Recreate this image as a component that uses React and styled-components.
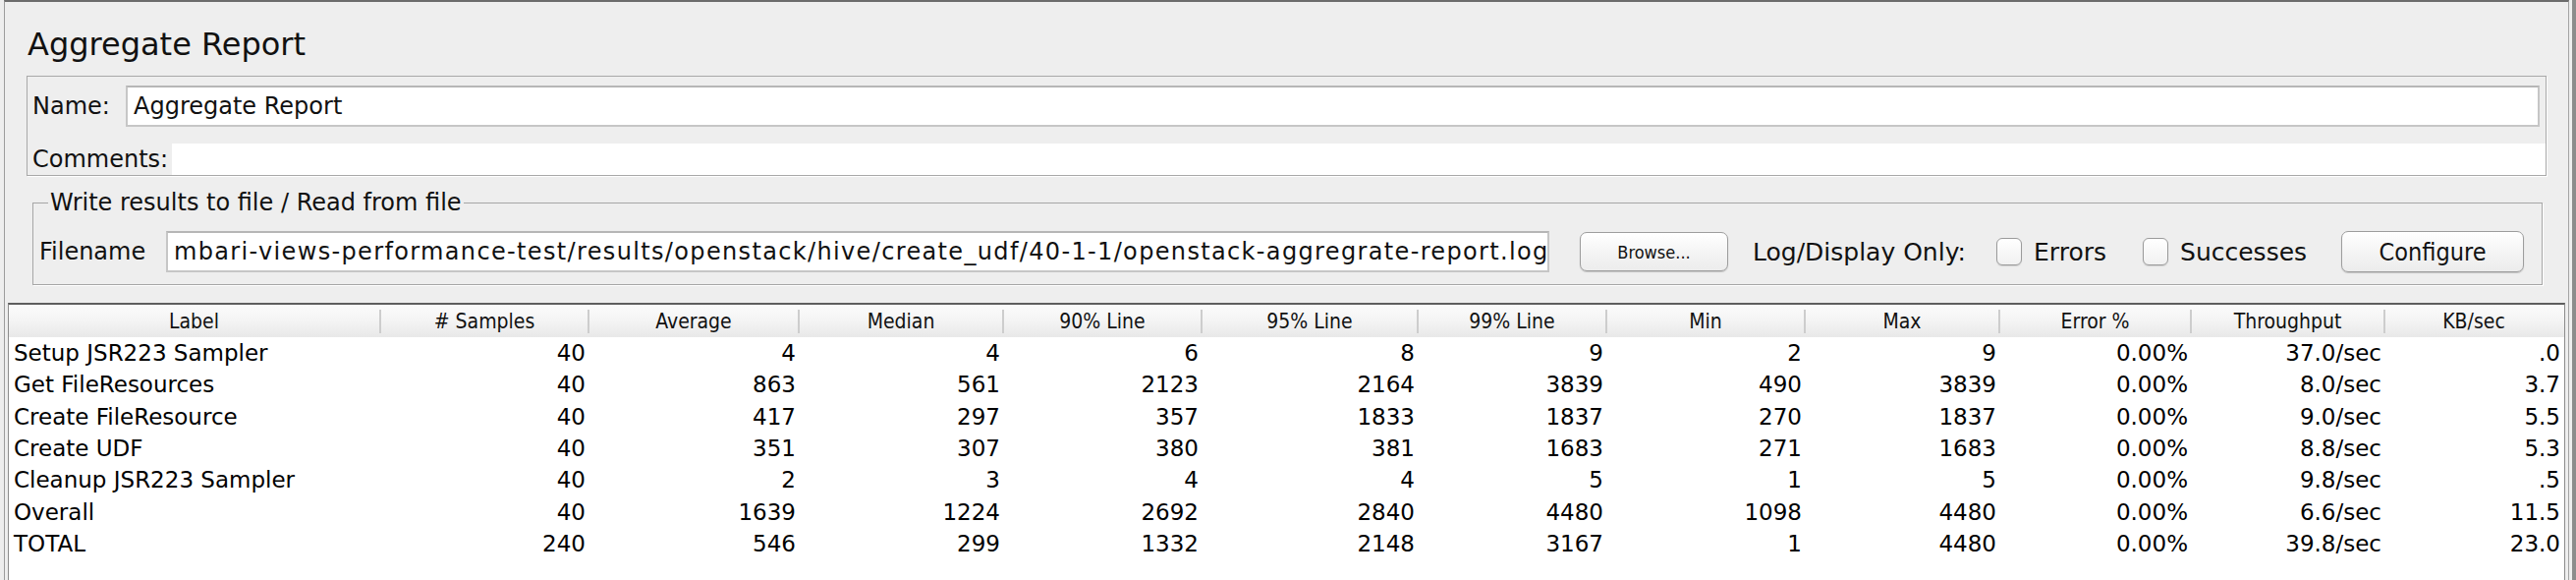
import React from "react";
import styled, { createGlobalStyle } from "styled-components";

const GlobalStyle = createGlobalStyle`
  html, body {
    margin: 0;
    padding: 0;
    background: #eeeeee;
  }
  body {
    font-family: "DejaVu Sans", "Liberation Sans", sans-serif;
    color: #111;
    overflow: hidden;
  }
`;

const Window = styled.div`
  width: 2622px;
  height: 590px;
  box-sizing: border-box;
  padding: 0 3px 0 4px;
  border-right: 4px solid #8c8c8c;
  background: #eeeeee;
  display: flex;
`;

const Frame = styled.div`
  flex: 1;
  height: 590px;
  box-sizing: border-box;
  border-top: 2px solid #6c6c6c;
  border-left: 1px solid #9c9c9c;
  border-right: 1px solid #a4a4a4;
  display: flex;
  flex-direction: column;
`;

const Title = styled.div`
  padding: 23px 0 0 23px;
  margin-bottom: 12px;
  height: 40px;
  line-height: 40px;
  font-size: 32px;
  color: #111;
`;

const NamePanel = styled.div`
  margin: 0 22px 0 22px;
  border: 1px solid #a8a8a8;
  box-shadow: 1px 1px 0 #ffffff;
  display: flex;
  flex-direction: column;
`;

const FieldRow = styled.div`
  display: flex;
  align-items: center;
  height: ${(p) => p.$h}px;
  margin-top: ${(p) => p.$top}px;
  padding: 0 ${(p) => p.$right}px 0 5px;
`;

const Label = styled.span`
  font-size: 24px;
  width: ${(p) => p.$w}px;
  flex: none;
  white-space: nowrap;
`;

const TextBox = styled.div`
  flex: ${(p) => (p.$w ? "none" : 1)};
  width: ${(p) => (p.$w ? `${p.$w}px` : "auto")};
  height: 42px;
  box-sizing: border-box;
  background: #ffffff;
  border: 2px solid #c6c6c6;
  border-top-color: #b6b6b6;
  padding-left: 6px;
  font-size: 24px;
  line-height: 38px;
  letter-spacing: ${(p) => p.$spacing || 0}px;
  white-space: nowrap;
  overflow: hidden;
`;

const BlankArea = styled.div`
  flex: 1;
  align-self: stretch;
  background: #ffffff;
`;

const Group = styled.fieldset`
  margin: 13px 26px 0 28px;
  padding: 0 17px 11px 6px;
  border: 1px solid #a6a6a6;
  box-shadow: 1px 1px 0 #ffffff;
  min-width: 0;
`;

const Legend = styled.legend`
  margin-left: 9px;
  padding: 0 2px;
  font-size: 24px;
  line-height: 28px;
`;

const ControlRow = styled.div`
  display: flex;
  align-items: center;
  height: 44px;
  margin-top: 14px;
`;

const Button = styled.div`
  flex: none;
  width: ${(p) => p.$w}px;
  height: ${(p) => p.$h}px;
  margin-left: ${(p) => p.$gap}px;
  box-sizing: border-box;
  border: 1px solid #9d9d9d;
  border-radius: 7px;
  background: linear-gradient(#ffffff, #f3f3f3 60%, #ececec);
  box-shadow: 0 1px 1px #c4c4c4;
  display: flex;
  align-items: center;
  justify-content: center;
  font-family: "DejaVu Sans Condensed", "DejaVu Sans", sans-serif;
  font-size: ${(p) => p.$fs}px;
  color: #111;
`;

const Caption = styled.span`
  flex: none;
  margin-left: ${(p) => p.$gap}px;
  font-size: 25px;
  white-space: nowrap;
`;

const Check = styled.span`
  flex: none;
  width: 26px;
  height: 28px;
  margin-left: ${(p) => p.$gap}px;
  box-sizing: border-box;
  border: 1px solid #9a9a9a;
  border-radius: 6px;
  background: linear-gradient(#ffffff, #f1f1f1);
  box-shadow: 0 1px 1px #d0d0d0;
`;

const TablePanel = styled.div`
  flex: 1;
  margin: 18px 3px 0 3px;
  border-top: 2px solid #5e5e5e;
  border-left: 1px solid #8c8c8c;
  border-right: 1px solid #8c8c8c;
  background: #ffffff;
`;

const COLS = "379px 212px 214px 208px 202px 220px 192px 202px 198px 195px 197px 1fr";

const HeaderRow = styled.div`
  display: grid;
  grid-template-columns: ${COLS};
  height: 33px;
  background: linear-gradient(#fbfbfb, #f4f4f4 50%, #e8e8e8);
  align-items: center;
`;

const HeaderCell = styled.div`
  height: 24px;
  line-height: 24px;
  text-align: center;
  border-right: 2px solid ${(p) => (p.$last ? "transparent" : "#cdcdcd")};
  font-family: "DejaVu Sans Condensed", "DejaVu Sans", sans-serif;
  font-size: 21px;
  color: #111;
  white-space: nowrap;
`;

const DataRow = styled.div`
  display: grid;
  grid-template-columns: ${COLS};
  height: 32.3px;
  align-items: center;
`;

const Cell = styled.div`
  font-size: 23px;
  text-align: ${(p) => (p.$left ? "left" : "right")};
  padding: ${(p) => (p.$left ? "0 0 0 5px" : "0 4px 0 0")};
  white-space: nowrap;
  color: #000;
`;

const headers = [
  "Label",
  "# Samples",
  "Average",
  "Median",
  "90% Line",
  "95% Line",
  "99% Line",
  "Min",
  "Max",
  "Error %",
  "Throughput",
  "KB/sec",
];

const rows = [
  ["Setup JSR223 Sampler", "40", "4", "4", "6", "8", "9", "2", "9", "0.00%", "37.0/sec", ".0"],
  ["Get FileResources", "40", "863", "561", "2123", "2164", "3839", "490", "3839", "0.00%", "8.0/sec", "3.7"],
  ["Create FileResource", "40", "417", "297", "357", "1833", "1837", "270", "1837", "0.00%", "9.0/sec", "5.5"],
  ["Create UDF", "40", "351", "307", "380", "381", "1683", "271", "1683", "0.00%", "8.8/sec", "5.3"],
  ["Cleanup JSR223 Sampler", "40", "2", "3", "4", "4", "5", "1", "5", "0.00%", "9.8/sec", ".5"],
  ["Overall", "40", "1639", "1224", "2692", "2840", "4480", "1098", "4480", "0.00%", "6.6/sec", "11.5"],
  ["TOTAL", "240", "546", "299", "1332", "2148", "3167", "1", "4480", "0.00%", "39.8/sec", "23.0"],
];

export default function App() {
  return (
    <>
      <GlobalStyle />
      <Window>
        <Frame>
          <Title>Aggregate Report</Title>
          <NamePanel>
            <FieldRow $h={42} $top={9} $right={6}>
              <Label $w={95}>Name:</Label>
              <TextBox>Aggregate Report</TextBox>
            </FieldRow>
            <FieldRow $h={32} $top={17} $right={0}>
              <Label $w={142}>Comments:</Label>
              <BlankArea />
            </FieldRow>
          </NamePanel>

          <Group>
            <Legend>Write results to file / Read from file</Legend>
            <ControlRow>
              <Label $w={129}>Filename</Label>
              <TextBox $w={1408} $spacing={1.35}>
                mbari-views-performance-test/results/openstack/hive/create_udf/40-1-1/openstack-aggregrate-report.log
              </TextBox>
              <Button $w={151} $h={40} $gap={31} $fs={18}>
                Browse...
              </Button>
              <Caption $gap={25}>Log/Display Only:</Caption>
              <Check $gap={31} />
              <Caption $gap={12}>Errors</Caption>
              <Check $gap={37} />
              <Caption $gap={12}>Successes</Caption>
              <Button $w={186} $h={42} $gap={35} $fs={25}>
                Configure
              </Button>
            </ControlRow>
          </Group>

          <TablePanel>
            <HeaderRow>
              {headers.map((h, i) => (
                <HeaderCell key={h} $last={i === headers.length - 1}>
                  {h}
                </HeaderCell>
              ))}
            </HeaderRow>
            {rows.map((r) => (
              <DataRow key={r[0]}>
                {r.map((v, i) => (
                  <Cell key={i} $left={i === 0}>
                    {v}
                  </Cell>
                ))}
              </DataRow>
            ))}
          </TablePanel>
        </Frame>
      </Window>
    </>
  );
}
